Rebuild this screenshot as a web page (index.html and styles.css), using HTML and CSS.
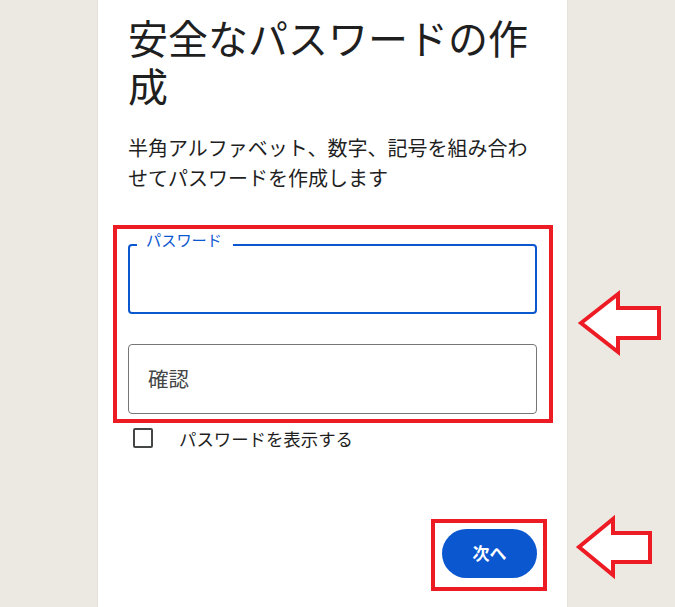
FILE: index.html
```html
<!DOCTYPE html>
<html lang="ja">
<head>
<meta charset="utf-8">
<title>安全なパスワードの作成</title>
<link rel="stylesheet" href="styles.css">
</head>
<body>
<main class="card">
  <h1 class="title">安全なパスワードの作成</h1>
  <p class="desc">半角アルファベット、数字、記号を組み合わせてパスワードを作成します</p>
  <div class="fields">
    <div class="field field-active">
      <span class="field-label">パスワード</span>
    </div>
    <div class="field">
      <span class="placeholder">確認</span>
    </div>
    <div class="mark mark-fields"></div>
  </div>
  <label class="show-row">
    <span class="checkbox"></span>
    <span class="show-text">パスワードを表示する</span>
  </label>
  <div class="actions">
    <div class="btn-wrap">
      <button class="btn-next" type="button">次へ</button>
      <div class="mark mark-btn"></div>
    </div>
  </div>
</main>
<svg class="arrows" width="675" height="607" viewBox="0 0 675 607">
  <polygon points="581,323 618,294 618,308 659,308 659,338 618,338 618,352" />
  <polygon points="579,547 613,519 613,533 650,533 650,562 613,562 613,575" />
</svg>
</body>
</html>
```
FILE: styles.css
```css
* { box-sizing: border-box; }
html, body { margin: 0; padding: 0; }
body {
  width: 675px;
  height: 607px;
  overflow: hidden;
  background: #ece8e2;
  font-family: "Noto Sans CJK JP", "Noto Sans", sans-serif;
  color: #1f1f1f;
  position: relative;
}
.card {
  width: 469px;
  height: 607px;
  margin-left: 98px;
  background: #fff;
  padding: 13px 30px 0;
  box-shadow: 0 0 1px rgba(0,0,0,0.15);
}
.title {
  margin: 0;
  font-size: 40px;
  line-height: 48px;
  font-weight: 400;
}
.desc {
  margin: 24px 0 0;
  font-size: 20px;
  line-height: 30px;
}
.fields {
  position: relative;
  margin-top: 51px;
  display: flex;
  flex-direction: column;
  gap: 30px;
}
.field {
  position: relative;
  height: 70px;
  border: 1px solid #747775;
  border-radius: 4px;
  display: flex;
  align-items: center;
  padding: 0 19px 3px;
}
.field-active {
  border: 2px solid #0b57d0;
}
.field-label {
  position: absolute;
  top: -16px;
  left: 7px;
  padding: 0 11px 0 9px;
  background: #fff;
  color: #0b57d0;
  font-size: 15.2px;
  line-height: 18px;
}
.placeholder {
  font-size: 20.5px;
  color: #444746;
}
.mark {
  position: absolute;
  border: 4px solid #ed1c24;
  pointer-events: none;
}
.mark-fields {
  top: -19px;
  left: -15px;
  right: -16px;
  bottom: -9px;
}
.show-row {
  display: flex;
  align-items: center;
  height: 40px;
  margin-top: 4px;
}
.checkbox {
  width: 20px;
  height: 20px;
  margin-left: 5px;
  border: 2px solid #444746;
  border-radius: 2px;
}
.show-text {
  margin-left: 26px;
  font-size: 17.4px;
}
.actions {
  display: flex;
  justify-content: flex-end;
  margin-top: 71px;
}
.btn-wrap {
  position: relative;
}
.btn-next {
  display: block;
  width: 95px;
  height: 49px;
  border: none;
  border-radius: 25px;
  background: #0b57d0;
  color: #fff;
  font-family: "Noto Sans CJK JP", "Noto Sans", sans-serif;
  font-size: 17px;
  font-weight: 700;
  padding: 0 0 2px;
}
.mark-btn {
  top: -10px;
  left: -11px;
  right: -10px;
  bottom: -13px;
}
.arrows {
  position: absolute;
  top: 0;
  left: 0;
  pointer-events: none;
}
.arrows polygon {
  fill: #fff;
  stroke: #ed1c24;
  stroke-width: 4;
  stroke-linejoin: miter;
}
```
